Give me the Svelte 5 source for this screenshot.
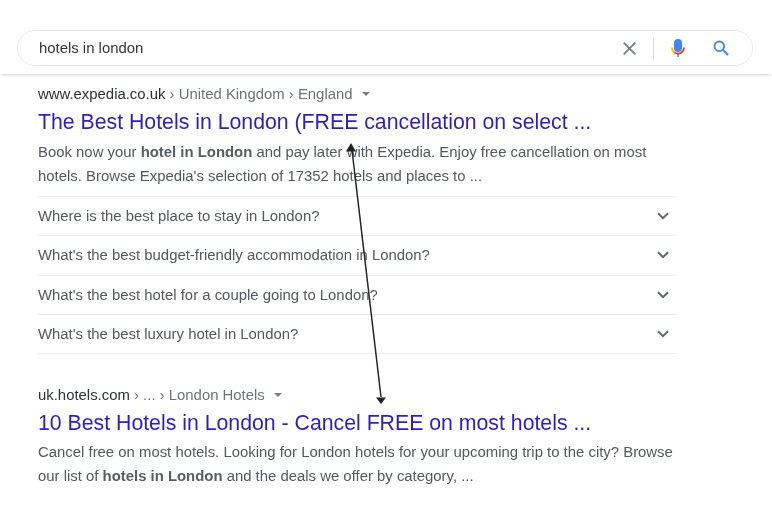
<script>
  const questions = [
    "Where is the best place to stay in London?",
    "What's the best budget-friendly accommodation in London?",
    "What's the best hotel for a couple going to London?",
    "What's the best luxury hotel in London?"
  ];
</script>

<div class="page">
  <header class="top">
    <div class="search">
      <span class="query">hotels in london</span>
      <svg class="clear" viewBox="0 0 13 13" width="13" height="13">
        <path d="M.7.7l11.600 11.600M12.300.7L.7 12.300" stroke="#7b7f84" stroke-width="1.800" fill="none" />
      </svg>
      <span class="divider"></span>
      <svg class="mic" viewBox="0 0 14 18" width="14" height="18">
        <rect x="3" y="0" width="8" height="13" rx="4" fill="#4285f4" />
        <path d="M1 8.500a6 6 0 0 0 2.500 5" stroke="#fbbc05" stroke-width="2" fill="none" />
        <path d="M3.500 13.500a6 6 0 0 0 7 0 6 6 0 0 0 2.500-5" stroke="#ea4335" stroke-width="2" fill="none" />
        <rect x="6.200" y="15" width="1.600" height="3" fill="#34a853" />
      </svg>
      <svg class="glass" viewBox="0 0 16 16" width="16" height="16">
        <circle cx="6.300" cy="6.300" r="4.800" stroke="#4285f4" stroke-width="1.900" fill="none" />
        <path d="M9.800 9.800l5.200 5.200" stroke="#4285f4" stroke-width="2.100" fill="none" />
      </svg>
    </div>
  </header>

  <main class="results">
    <section class="result">
      <div class="crumb"><span class="site">www.expedia.co.uk</span> › United Kingdom › England<span class="caret"></span></div>
      <a class="title" href="#a">The Best Hotels in London (FREE cancellation on select ...</a>
      <p class="snippet">Book now your <b>hotel in London</b> and pay later with Expedia. Enjoy free cancellation on most<br />hotels. Browse Expedia's selection of 17352 hotels and places to ...</p>
      <ul class="faq">
        {#each questions as q}
          <li>
            <span>{q}</span>
            <svg viewBox="0 0 12 8" width="12" height="8">
              <path d="M1 1.200l5 5 5-5" stroke="#63676c" stroke-width="2" fill="none" />
            </svg>
          </li>
        {/each}
      </ul>
    </section>

    <section class="result second">
      <div class="crumb"><span class="site">uk.hotels.com</span> › ... › London Hotels<span class="caret"></span></div>
      <a class="title" href="#b">10 Best Hotels in London - Cancel FREE on most hotels ...</a>
      <p class="snippet">Cancel free on most hotels. Looking for London hotels for your upcoming trip to the city? Browse<br />our list of <b>hotels in London</b> and the deals we offer by category, ...</p>
    </section>
  </main>

  <!-- annotation arrow drawn over the results -->
  <svg class="arrow" viewBox="0 0 772 524" width="772" height="524">
    <path d="M352 150L381 397" stroke="#262626" stroke-width="1.500" fill="none" />
    <path d="M351 143l5 8.500h-10z" fill="#222" />
    <path d="M376 397.500h10l-5 6.500z" fill="#222" />
  </svg>
</div>

<style>
  :global(body) {
    margin: 0;
    background: #fff;
  }
  .page {
    position: relative;
    width: 772px;
    height: 524px;
    overflow: hidden;
    font-family: "Liberation Sans", Arial, sans-serif;
    color: #55585d;
    font-size: 14.900px;
    filter: blur(0.35px);
  }
  .top {
    height: 74px;
    box-sizing: border-box;
    padding: 30px 19px 0 17px;
    box-shadow: 0 3px 3px -2px rgba(0, 0, 0, 0.18);
  }
  .search {
    height: 36px;
    box-sizing: border-box;
    border: 1px solid #e6e8ee;
    border-radius: 18px;
    display: flex;
    align-items: center;
    padding: 0 23px 0 21px;
  }
  .query {
    flex: 1;
    color: #35373b;
  }
  .clear {
    margin-right: 17px;
  }
  .divider {
    width: 1px;
    height: 21px;
    background: #dfe1e5;
    margin-right: 17px;
  }
  .mic {
    margin-right: 28px;
  }
  .results {
    padding: 11px 0 0 38px;
    width: 638px;
  }
  .crumb {
    line-height: 18px;
    color: #6f7378;
  }
  .site {
    color: #303236;
  }
  .caret {
    display: inline-block;
    margin-left: 9px;
    vertical-align: 3px;
    border-top: 4.500px solid #7b7f84;
    border-left: 4.500px solid transparent;
    border-right: 4.500px solid transparent;
  }
  .title {
    display: block;
    margin-top: 6px;
    font-size: 21.270px;
    line-height: 27px;
    color: #2f1ec0;
    text-decoration: none;
    white-space: nowrap;
  }
  .snippet {
    margin: 4px 0 0;
    line-height: 24px;
    white-space: nowrap;
  }
  .snippet b {
    font-weight: bold;
    color: #5a5d62;
  }
  .faq {
    list-style: none;
    margin: 8px 0 0;
    padding: 0;
    border-top: 1px solid #ececec;
  }
  .faq li {
    height: 38.300px;
    border-bottom: 1px solid #ececec;
    display: flex;
    align-items: center;
    justify-content: space-between;
    padding-right: 7px;
  }
  .second {
    margin-top: 32px;
  }
  .second .snippet {
    margin-top: 3px;
  }
  .arrow {
    position: absolute;
    left: 0;
    top: 0;
    pointer-events: none;
  }
</style>
